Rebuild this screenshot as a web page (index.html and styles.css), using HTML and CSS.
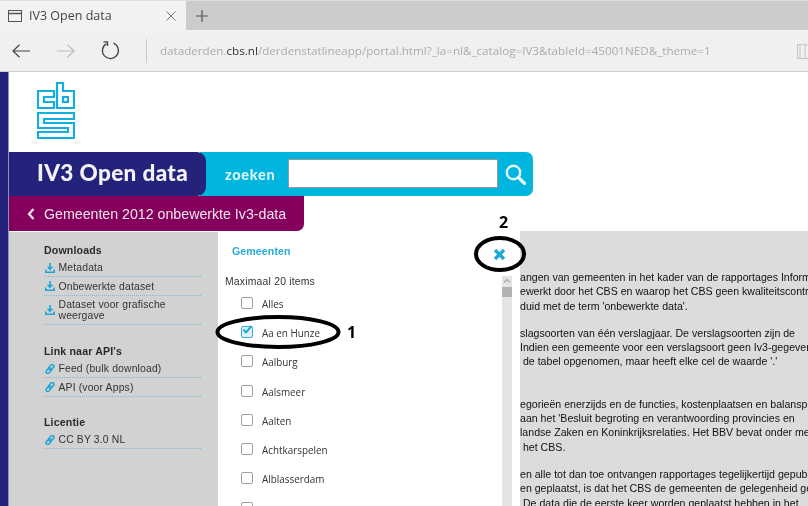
FILE: index.html
```html
<!DOCTYPE html>
<html lang="nl">
<head>
  <meta charset="UTF-8">
  <title>IV3 Open data</title>
  <meta name="viewport" content="width=device-width,initial-scale=1">
  <link rel="stylesheet" href="styles.css">
</head>
<body>
  <div class="tabstrip">
    <div class="tab">
      <svg class="tab-icon" width="14" height="12" viewBox="0 0 14 12"><rect x="0.5" y="0.5" width="13" height="11" fill="none" stroke="#555"/><path d="M1 3.5H13" stroke="#555" stroke-width="1.5"/></svg>
      <span class="tab-title">IV3 Open data</span>
      <svg class="tab-close" width="10" height="10" viewBox="0 0 10 10"><path d="M0.5 0.5L9.5 9.5M9.5 0.5L0.5 9.5" stroke="#777" fill="none"/></svg>
    </div>
    <svg class="tab-new" width="12" height="12" viewBox="0 0 12 12"><path d="M6 0V12M0 6H12" stroke="#555" stroke-width="1.2" fill="none"/></svg>
  </div>
  <div class="toolbar">
    <svg class="nav nav-back" width="18" height="14" viewBox="0 0 18 14"><path d="M18 7H1M7.5 0.8L1 7L7.5 13.2" fill="none" stroke="#444" stroke-width="1.2"/></svg>
    <svg class="nav nav-forward" width="18" height="14" viewBox="0 0 18 14"><path d="M0 7H17M10.5 0.8L17 7L10.5 13.2" fill="none" stroke="#bbb" stroke-width="1.2"/></svg>
    <svg class="nav nav-reload" width="19" height="19" viewBox="0 0 19 19"><path d="M5.5 2.6A8 8 0 1 0 12.5 2.2" fill="none" stroke="#444" stroke-width="1.3"/><path d="M2.5 0.8H6.5V5" fill="none" stroke="#444" stroke-width="1.3"/></svg>
    <span class="url-sep"></span>
    <div class="url">dataderden.<b>cbs.nl</b>/derdenstatlineapp/portal.html?_la=nl&amp;_catalog=IV3&amp;tableId=45001NED&amp;_theme=1</div>
    <svg class="reader" width="11" height="16" viewBox="0 0 11 16"><path d="M0.5 1.5H6.5L8 0.5V15.5H0.5ZM3 1.5V15M8 2H11M8 15.5H11" fill="none" stroke="#c4c4c4"/></svg>
  </div>

  <div class="page">
    <div class="stripe"></div>
    <div class="content">
      <div class="logo">
        <svg width="38" height="58" viewBox="0 0 38 58">
          <g fill="none" stroke="#12aee0" stroke-width="2.2">
            <path d="M1 9H17V15H7V20H17V26H1Z"/>
            <path d="M20 1H26V9H37V26H20Z"/>
            <path d="M26 15H31V20H26Z"/>
            <path d="M1 31H37V37H7V41H37V56H1V50H31V46H1Z"/>
          </g>
        </svg>
      </div>

      <div class="brand-row">
        <div class="brand">IV3 Open data</div>
        <div class="search">
          <span class="search-label">zoeken</span>
          <input class="search-input" type="text">
          <svg class="search-icon" width="21" height="21" viewBox="0 0 21 21"><circle cx="8.5" cy="8.5" r="6.7" fill="none" stroke="#e6f8fd" stroke-width="2.4"/><path d="M13.5 13.5L19.5 19.5" stroke="#e6f8fd" stroke-width="3.2" stroke-linecap="round"/></svg>
        </div>
      </div>

      <div class="crumb">
        <svg width="8" height="12" viewBox="0 0 8 12"><path d="M6.5 1L2 6L6.5 11" fill="none" stroke="#eedde8" stroke-width="2.4"/></svg>
        <span>Gemeenten 2012 onbewerkte Iv3-data</span>
      </div>

      <div class="columns">
        <aside class="sidebar">
          <h3>Downloads</h3>
          <a class="side-link">
            <svg class="ico" width="10" height="10" viewBox="0 0 10 10"><use href="#i-download"/></svg>
            <span>Metadata</span>
          </a>
          <a class="side-link">
            <svg class="ico" width="10" height="10" viewBox="0 0 10 10"><use href="#i-download"/></svg>
            <span>Onbewerkte dataset</span>
          </a>
          <a class="side-link">
            <svg class="ico" width="10" height="10" viewBox="0 0 10 10"><use href="#i-download"/></svg>
            <span>Dataset voor grafische<br>weergave</span>
          </a>
          <h3 class="sec">Link naar API's</h3>
          <a class="side-link">
            <svg class="ico" width="10" height="10" viewBox="0 0 10 10"><use href="#i-link"/></svg>
            <span>Feed (bulk download)</span>
          </a>
          <a class="side-link">
            <svg class="ico" width="10" height="10" viewBox="0 0 10 10"><use href="#i-link"/></svg>
            <span>API (voor Apps)</span>
          </a>
          <h3 class="sec">Licentie</h3>
          <a class="side-link">
            <svg class="ico" width="10" height="10" viewBox="0 0 10 10"><use href="#i-link"/></svg>
            <span>CC BY 3.0 NL</span>
          </a>
        </aside>

        <section class="picker">
          <h4>Gemeenten</h4>
          <p class="picker-note">Maximaal 20 items</p>
          <ul class="items">
            <li><span class="box"></span>Alles</li>
            <li><span class="box box-on"><svg width="12" height="11" viewBox="0 0 12 11"><path d="M2.5 4.5L5 7.5L10.5 1" fill="none" stroke="#1fa9d6" stroke-width="2"/></svg></span>Aa en Hunze</li>
            <li><span class="box"></span>Aalburg</li>
            <li><span class="box"></span>Aalsmeer</li>
            <li><span class="box"></span>Aalten</li>
            <li><span class="box"></span>Achtkarspelen</li>
            <li><span class="box"></span>Alblasserdam</li>
            <li><span class="box"></span>&nbsp;</li>
          </ul>
        </section>

        <div class="scrollbar">
          <svg class="scroll-up" width="10" height="10" viewBox="0 0 10 10"><path d="M2 6.5L5 3.5L8 6.5" fill="none" stroke="#a8a8a8" stroke-width="1.2"/></svg>
          <div class="scroll-thumb"></div>
        </div>

        <section class="text-panel">
          <p>angen van gemeenten in het kader van de rapportages Informatie<br>ewerkt door het CBS en waarop het CBS geen kwaliteitscontrole<br>duid met de term 'onbewerkte data'.</p>
          <p>slagsoorten van één verslagjaar. De verslagsoorten zijn de<br>Indien een gemeente voor een verslagsoort geen Iv3-gegevens<br>&nbsp;de tabel opgenomen, maar heeft elke cel de waarde '.'</p>
          <p class="wide-gap">egorieën enerzijds en de functies, kostenplaatsen en balansposten<br>aan het 'Besluit begroting en verantwoording provincies en<br>landse Zaken en Koninkrijksrelaties. Het BBV bevat onder meer<br>&nbsp;het CBS.</p>
          <p>en alle tot dan toe ontvangen rapportages tegelijkertijd gepubliceerd<br>en geplaatst, is dat het CBS de gemeenten de gelegenheid geeft<br>&nbsp;De data die de eerste keer worden geplaatst hebben in het</p>
        </section>
      </div>
    </div>

    <!-- handgetekende markeringen -->
    <svg class="mark mark-one" width="130" height="40" viewBox="0 0 130 40"><ellipse cx="65" cy="20" rx="60.5" ry="15" fill="none" stroke="#000" stroke-width="4"/></svg>
    <span class="mark-num mark-num-one">1</span>
    <svg class="mark mark-two" width="56" height="40" viewBox="0 0 56 40"><ellipse cx="28" cy="20" rx="24" ry="16" fill="none" stroke="#000" stroke-width="4"/></svg>
    <span class="mark-num mark-num-two">2</span>
    <svg class="close-x" width="13" height="13" viewBox="0 0 13 13"><path d="M2 2L11 11M11 2L2 11" stroke="#1fa9d6" stroke-width="3.4"/></svg>
  </div>

  <svg class="defs" width="0" height="0">
    <defs>
      <g id="i-download" fill="none" stroke="#1fa5d6">
        <path d="M5 0V6M2.6 3.8L5 6.3L7.4 3.8" stroke-width="1.6"/>
        <path d="M0.8 6.5V9.2H9.2V6.5" stroke-width="1.6"/>
      </g>
      <g id="i-link" fill="none" stroke="#1fa5d6" stroke-width="1.5">
        <rect x="4.6" y="0.2" width="3.4" height="6.2" rx="1.7" transform="rotate(40 6.3 3.3)"/>
        <rect x="2" y="3.6" width="3.4" height="6.2" rx="1.7" transform="rotate(40 3.7 6.7)"/>
      </g>
    </defs>
  </svg>
</body>
</html>
```

FILE: styles.css
```css
html, body { margin: 0; padding: 0; height: 506px; overflow: hidden; background: #fff; }
body { font-family: "Liberation Sans", Arial, sans-serif; filter: blur(0.45px); }

/* browser chrome */
.tabstrip { height: 30px; background: #ccc; border-top: 1px solid #ddd; box-sizing: border-box; display: flex; align-items: center; }
.tab { width: 186px; height: 29px; background: #f2f2f2; display: flex; align-items: center; box-sizing: border-box; padding: 0 10px 0 8px; }
.tab-icon { margin-right: 7px; }
.tab-title { flex: 1; font: 12.5px "Open Sans", sans-serif; color: #444; }
.tab-new { margin-left: 10px; }
.toolbar { height: 42px; background: #f0f0f0; border-bottom: 1px solid #d0d0d0; box-sizing: border-box; display: flex; align-items: center; padding-left: 12px; position: relative; }
.nav { flex: none; }
.nav-back { margin-right: 27px; }
.nav-forward { margin-right: 26px; }
.url-sep { width: 1px; height: 24px; background: #c8c8c8; margin: 0 13px 0 26px; }
.url { font: 11.65px "Open Sans", sans-serif; color: #ababab; white-space: nowrap; flex: 1; }
.url b { font-weight: 400; color: #333; }
.reader { margin-right: 0; flex: none; }

/* page */
.page { display: flex; height: 434px; position: relative; overflow: hidden; }
.stripe { width: 9px; flex: none; background: #24237b; border-right: 1px solid #8f8fc0; box-sizing: border-box; }
.content { flex: 1; min-width: 0; display: flex; flex-direction: column; }
.logo { height: 80px; padding: 10px 0 0 28px; box-sizing: border-box; }
.logo svg { display: block; }

.brand-row { display: flex; height: 44px; }
.brand { width: 197px; box-sizing: border-box; background: #24237b; color: #f2f2f8; border-radius: 0 9px 9px 0; font: 900 22.5px Lato, sans-serif; line-height: 42px; padding-left: 28px; position: relative; z-index: 1; white-space: nowrap; letter-spacing: 0.37px; }
.search { width: 333px; margin-left: -6px; box-sizing: border-box; background: #00b5de; border-radius: 0 7px 7px 0; display: flex; align-items: center; padding: 0 7px 0 25px; }
.search-label { font: 900 14.5px Lato, sans-serif; color: #d9f5fb; width: 63px; flex: none; letter-spacing: 0.7px; }
.search-input { width: 210px; height: 29px; box-sizing: border-box; border: 1px solid #999; background: #fff; padding: 0; margin: 0 0 1px; flex: none; }
.search-icon { margin-left: 7px; }

.crumb { width: 295px; height: 35px; box-sizing: border-box; background: #85005d; border-radius: 0 0 7px 0; color: #f1e4ec; display: flex; align-items: center; padding-left: 18px; font-size: 14.2px; }
.crumb svg { margin-right: 9px; }

.columns { flex: 1; display: flex; min-height: 0; }
.sidebar { width: 209px; flex: none; margin-top: 1px; background: #d2d2d2; box-sizing: border-box; padding: 12px 17px 0 35px; color: #333; font-size: 10.4px; letter-spacing: 0.15px; }
.sidebar h3 { margin: 0 0 2.6px; font-size: 10.6px; line-height: 12px; font-weight: 700; color: #2a2a2a; }
.sidebar h3.sec { margin-top: 19.5px; }
.side-link { display: flex; align-items: center; line-height: 11px; padding: 3.6px 0 3px 1px; border-bottom: 1px dotted #7fbcd2; }
.side-link span { display: block; }
.ico { flex: none; margin-right: 3.5px; }

.picker { width: 284px; flex: none; box-sizing: border-box; padding: 13px 0 0 7px; background: #fff; overflow: hidden; }
.picker h4 { margin: 0 0 0 7px; font-size: 10.6px; line-height: 14px; font-weight: 700; color: #29abdc; letter-spacing: 0.1px; }
.picker-note { margin: 18px 0 0; font-size: 10.4px; line-height: 12px; color: #333; letter-spacing: 0.2px; }
.items { list-style: none; margin: 1px 0 0; padding: 0 0 0 16px; font: 9.9px "Open Sans", sans-serif; color: #333; }
.items li { height: 29.3px; display: flex; align-items: center; }
.box { width: 10px; height: 10px; flex: none; border: 1px solid #a0a0a0; border-radius: 2px; background: #fff; margin: -2px 9px 0 0; position: relative; }
.box-on { border-color: #35aedb; background: #dff2fa; }
.box-on svg { position: absolute; left: -1px; top: -2px; }

.scrollbar { width: 10px; flex: none; margin-top: 45px; background: #e4e4e4; position: relative; }
.scroll-up { display: block; }
.scroll-thumb { height: 10px; margin-top: 1px; background: #b2b2b2; }

.text-panel { flex: 1; min-width: 0; margin-left: 8px; background: #dcdcdc; padding-top: 39px; font-size: 10.6px; line-height: 14.3px; color: #111; white-space: nowrap; overflow: hidden; }
.text-panel p { margin: 0 0 13px; }
.text-panel p.wide-gap { margin-top: 28px; }

/* annotations over the page */
.mark { position: absolute; }
.mark-one { left: 213px; top: 240px; }
.mark-two { left: 472px; top: 162px; }
.mark-num { position: absolute; font: 700 16px "Noto Sans", sans-serif; color: #000; line-height: 20px; }
.mark-num-one { left: 347px; top: 250px; }
.mark-num-two { left: 499px; top: 140px; }
.close-x { position: absolute; left: 492.5px; top: 175.5px; }
.defs { position: absolute; }
```
